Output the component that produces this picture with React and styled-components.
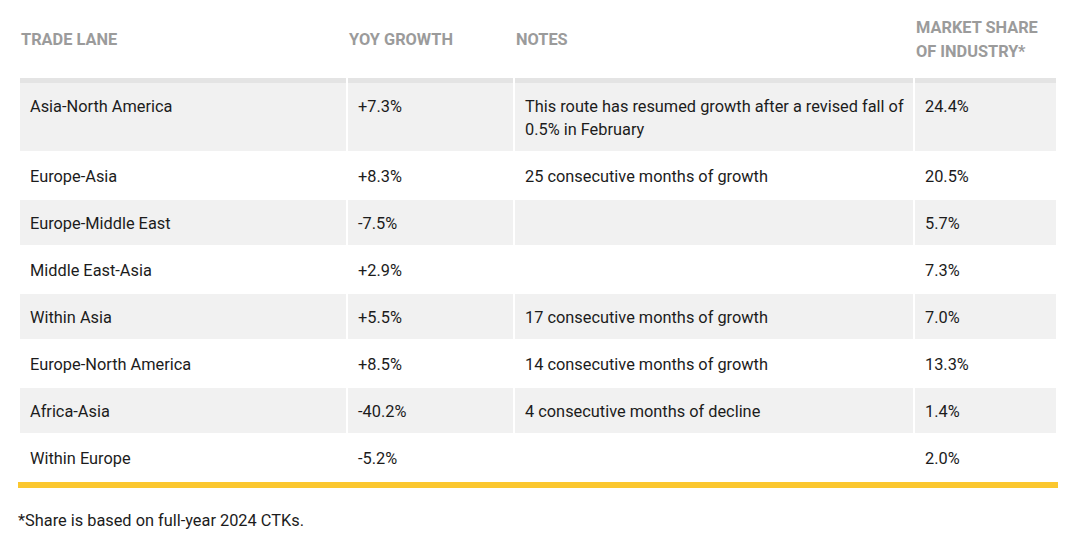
import React from "react";
import styled, { createGlobalStyle } from "styled-components";

const Global = createGlobalStyle`
  html, body { margin: 0; padding: 0; background: #fff; }
  body { font-family: Roboto, "Liberation Sans", sans-serif; color: #1c1c1c; }
`;

const Page = styled.div`
  padding: 0 14px 0 18px;
`;

const Table = styled.table`
  width: 1040px;
  table-layout: fixed;
  border-collapse: separate;
  border-spacing: 2px;
  border-bottom: 6px solid #fbc72f;
`;

const Th = styled.th`
  text-align: left;
  vertical-align: middle;
  padding: 14px 1px 12px;
  height: 48px;
  font-size: 16.35px;
  line-height: 24px;
  font-weight: 700;
  text-transform: uppercase;
  color: #9b9b9b;
`;

const Row = styled.tr`
  background: ${(p) => (p.$shaded ? "#f1f1f1" : "#fff")};
`;

const Td = styled.td`
  vertical-align: top;
  padding: 12px 2px 10px 10px;
  font-size: 16.35px;
  line-height: 23px;
  color: #1c1c1c;
  border-top: ${(p) => (p.$first ? "5px solid #e4e4e4" : "0")};
`;

const Footnote = styled.p`
  margin: 21px 0 0;
  font-size: 16.35px;
  line-height: 23px;
  color: #1c1c1c;
`;

const rows = [
  ["Asia-North America", "+7.3%", "This route has resumed growth after a revised fall of 0.5% in February", "24.4%"],
  ["Europe-Asia", "+8.3%", "25 consecutive months of growth", "20.5%"],
  ["Europe-Middle East", "-7.5%", "", "5.7%"],
  ["Middle East-Asia", "+2.9%", "", "7.3%"],
  ["Within Asia", "+5.5%", "17 consecutive months of growth", "7.0%"],
  ["Europe-North America", "+8.5%", "14 consecutive months of growth", "13.3%"],
  ["Africa-Asia", "-40.2%", "4 consecutive months of decline", "1.4%"],
  ["Within Europe", "-5.2%", "", "2.0%"],
];

export default function App() {
  return (
    <Page>
      <Global />
      <Table>
        <colgroup>
          <col style={{ width: 326 }} />
          <col style={{ width: 165 }} />
          <col style={{ width: 398 }} />
          <col style={{ width: 141 }} />
        </colgroup>
        <thead>
          <tr>
            <Th>Trade lane</Th>
            <Th>YoY growth</Th>
            <Th>Notes</Th>
            <Th>Market share of industry*</Th>
          </tr>
        </thead>
        <tbody>
          {rows.map((r, i) => (
            <Row key={i} $shaded={i % 2 === 0}>
              {r.map((c, j) => (
                <Td key={j} $first={i === 0}>{c}</Td>
              ))}
            </Row>
          ))}
        </tbody>
      </Table>
      <Footnote>*Share is based on full-year 2024 CTKs.</Footnote>
    </Page>
  );
}
